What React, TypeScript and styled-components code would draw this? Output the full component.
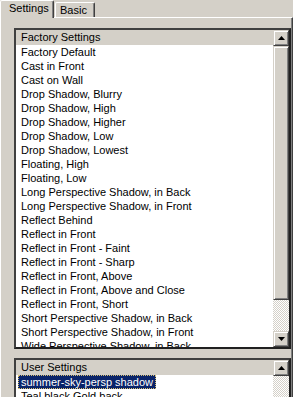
import React from "react";
import styled, { createGlobalStyle } from "styled-components";

const GlobalStyle = createGlobalStyle`
  html, body {
    margin: 0;
    padding: 0;
    background: #d4d0c8;
  }
  body {
    font-family: "Liberation Sans", Arial, sans-serif;
    font-size: 11px;
    color: #000;
  }
`;

const factorySettings = [
  "Factory Default",
  "Cast in Front",
  "Cast on Wall",
  "Drop Shadow, Blurry",
  "Drop Shadow, High",
  "Drop Shadow, Higher",
  "Drop Shadow, Low",
  "Drop Shadow, Lowest",
  "Floating, High",
  "Floating, Low",
  "Long Perspective Shadow, in Back",
  "Long Perspective Shadow, in Front",
  "Reflect Behind",
  "Reflect in Front",
  "Reflect in Front - Faint",
  "Reflect in Front - Sharp",
  "Reflect in Front, Above",
  "Reflect in Front, Above and Close",
  "Reflect in Front, Short",
  "Short Perspective Shadow, in Back",
  "Short Perspective Shadow, in Front",
  "Wide Perspective Shadow, in Back",
];

const Window = styled.div`
  width: 293px;
  height: 397px;
  overflow: hidden;
  background: #d4d0c8;
  display: flex;
  flex-direction: column;
`;

const TabStrip = styled.div`
  display: flex;
  align-items: flex-end;
  height: 17px;
  flex-shrink: 0;
  position: relative;
  z-index: 1;
`;

const Tab = styled.div<{ $active?: boolean; $w: number }>`
  box-sizing: border-box;
  width: ${(p) => p.$w}px;
  height: ${(p) => (p.$active ? 18 : 15)}px;
  margin-bottom: ${(p) => (p.$active ? -1 : 0)}px;
  margin-left: ${(p) => (p.$active ? 0 : 1)}px;
  background: #d4d0c8;
  border-top: 1px solid #fff;
  border-left: 1px solid #fff;
  border-right: 1px solid #404040;
  box-shadow: inset -1px 0 #808080;
  border-radius: 2px 2px 0 0;
  padding-left: ${(p) => (p.$active ? 8 : 4)}px;
  line-height: ${(p) => (p.$active ? 15 : 14)}px;
  white-space: nowrap;
`;

const Panel = styled.div`
  flex: 1;
  min-height: 0;
  border-top: 1px solid #fff;
  border-left: 1px solid #fff;
  border-right: 1px solid #404040;
  box-shadow: inset -1px 0 #808080;
  padding: 10px 1px 0 13px;
  display: flex;
  flex-direction: column;
  gap: 9px;
`;

const ListBox = styled.div<{ $h: number }>`
  box-sizing: border-box;
  height: ${(p) => p.$h}px;
  flex-shrink: 0;
  border: 2px solid;
  border-color: #404040 #202020 #202020 #404040;
  background: #fff;
  display: flex;
  overflow: hidden;
`;

const ListContent = styled.div`
  flex: 1;
  min-width: 0;
  overflow: hidden;
`;

const Header = styled.div`
  height: 15px;
  line-height: 15px;
  background: #d4d0c8;
  padding-left: 5px;
  white-space: nowrap;
`;

const Item = styled.div`
  height: 14px;
  line-height: 14px;
  padding-left: 5px;
  white-space: nowrap;
`;

const SelectedItem = styled.div`
  height: 14px;
  line-height: 12px;
  padding-left: 2px;
  white-space: nowrap;
`;

const Highlight = styled.span`
  display: inline-block;
  background: #0a246a;
  color: #fff;
  padding: 0 2px;
  border: 1px dotted #d8c070;
`;

const ScrollBar = styled.div`
  width: 16px;
  flex-shrink: 0;
  display: flex;
  flex-direction: column;
`;

const ScrollButton = styled.div`
  box-sizing: border-box;
  width: 16px;
  height: 16px;
  flex-shrink: 0;
  background: #d4d0c8;
  border: 1px solid;
  border-color: #d4d0c8 #404040 #404040 #d4d0c8;
  box-shadow: inset 1px 1px #fff, inset -1px -1px #808080;
  display: flex;
  align-items: center;
  justify-content: center;
`;

const Thumb = styled(ScrollButton)<{ $h: number }>`
  height: ${(p) => p.$h}px;
`;

const Track = styled.div`
  flex: 1;
  background: repeating-conic-gradient(#d4d0c8 0 25%, #fff 0 50%) 0 0 / 2px
    2px;
`;

const Arrow: React.FC<{ up?: boolean }> = ({ up }) => (
  <svg width="7" height="4" viewBox="0 0 7 4">
    <path d={up ? "M3.5 0L7 4H0Z" : "M0 0H7L3.5 4Z"} fill="#000" />
  </svg>
);

export default function App() {
  return (
    <>
      <GlobalStyle />
      <Window>
        <TabStrip>
          <Tab $active $w={54}>
            Settings
          </Tab>
          <Tab $w={40}>Basic</Tab>
        </TabStrip>
        <Panel>
          <ListBox $h={321}>
            <ListContent>
              <Header>Factory Settings</Header>
              {factorySettings.map((name) => (
                <Item key={name}>{name}</Item>
              ))}
            </ListContent>
            <ScrollBar>
              <ScrollButton>
                <Arrow up />
              </ScrollButton>
              <Thumb $h={254} />
              <Track />
              <ScrollButton>
                <Arrow />
              </ScrollButton>
            </ScrollBar>
          </ListBox>
          <ListBox $h={80}>
            <ListContent>
              <Header>User Settings</Header>
              <SelectedItem>
                <Highlight>summer-sky-persp shadow</Highlight>
              </SelectedItem>
              <Item>Teal black Gold back</Item>
            </ListContent>
            <ScrollBar>
              <ScrollButton>
                <Arrow up />
              </ScrollButton>
              <Track />
            </ScrollBar>
          </ListBox>
        </Panel>
      </Window>
    </>
  );
}
